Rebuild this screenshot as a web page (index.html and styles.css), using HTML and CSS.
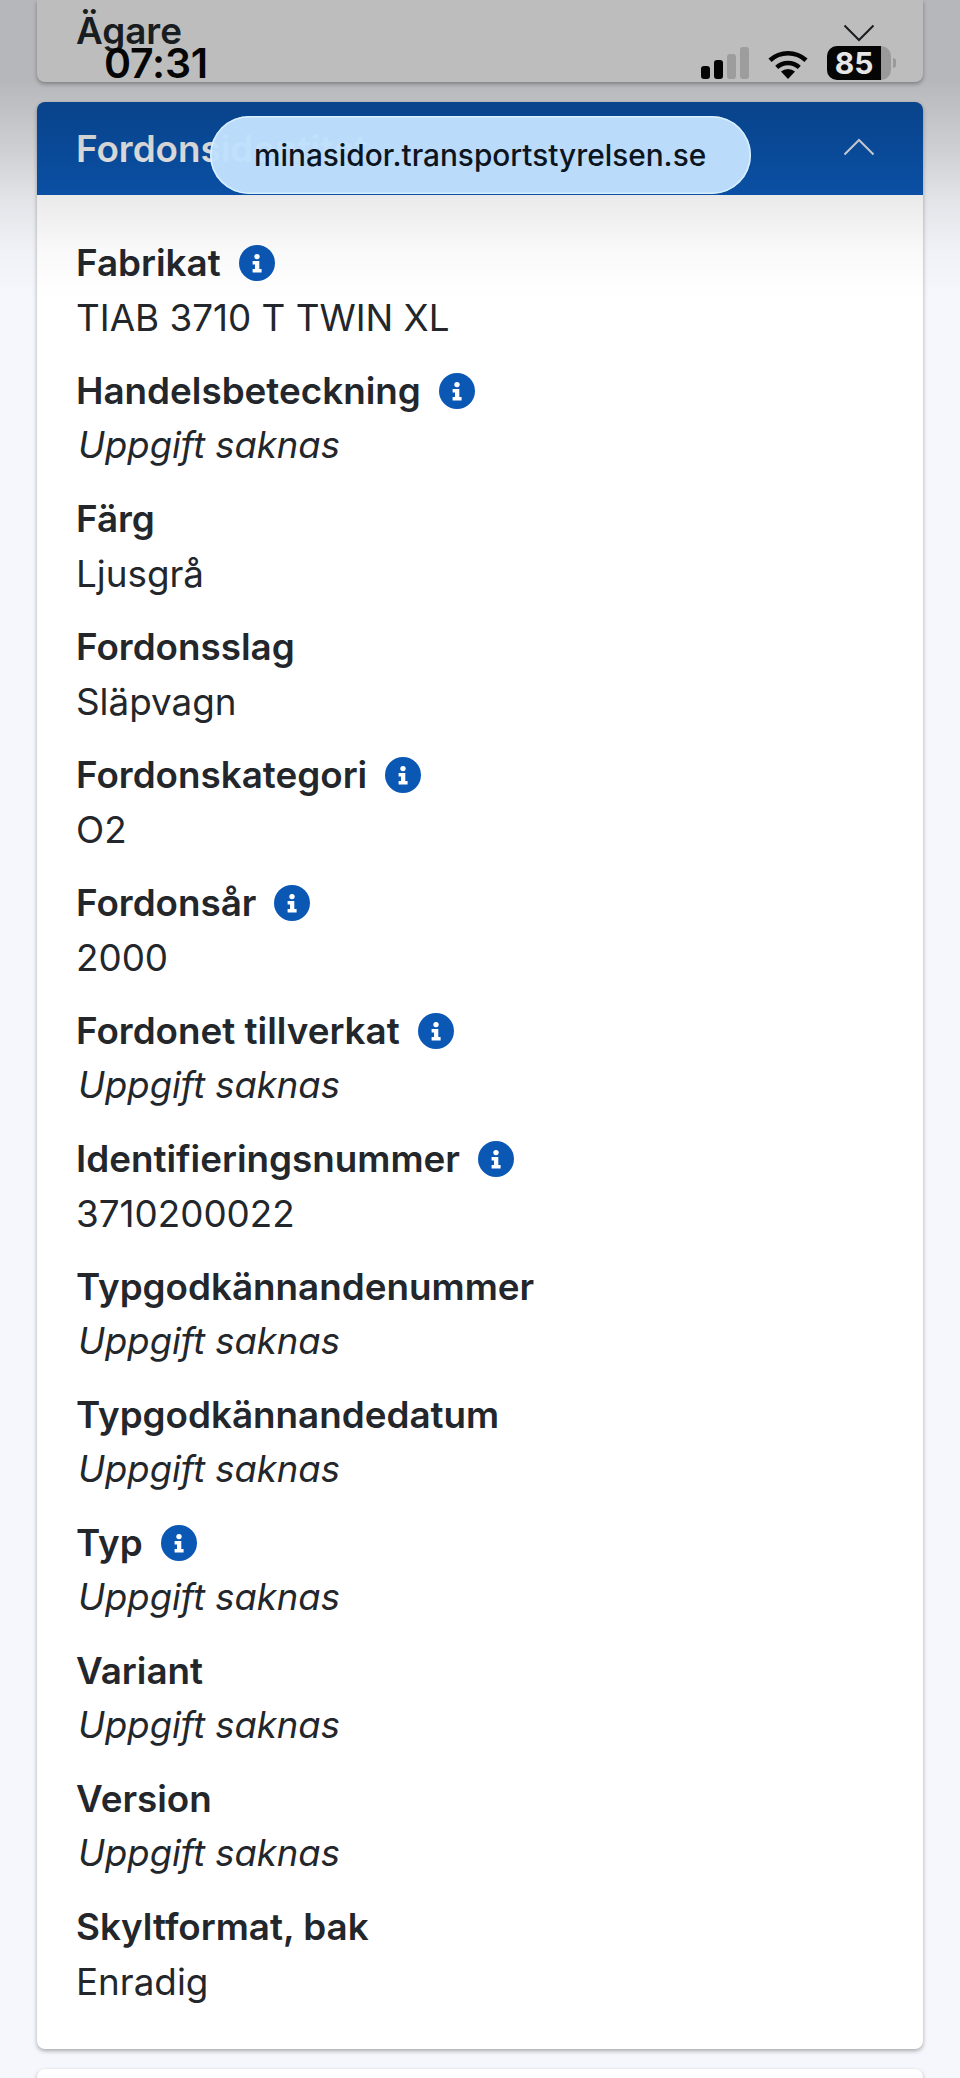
FILE: index.html
```html
<!DOCTYPE html>
<html lang="sv">
<head>
<meta charset="utf-8">
<title>Fordonsidentitet</title>
<link rel="stylesheet" href="styles.css">
</head>
<body>
<svg class="defs" width="0" height="0" aria-hidden="true">
  <symbol id="info" viewBox="0 0 36 36">
    <circle cx="18" cy="18" r="18" fill="#0b57b4"/>
    <circle cx="18" cy="11.6" r="2.7" fill="#fff"/>
    <path d="M13.6 16h6.7v8h2.3v3.4h-9v-3.4h2.4v-4.6h-2.4z" fill="#fff"/>
  </symbol>
</svg>
<main class="page">
  <section class="card card-owner">
    <div class="owner-row">
      <span class="label">Ägare</span>
      <svg class="chevron" viewBox="0 0 32 18" aria-hidden="true"><path d="M1.5 1.5 16 16 30.5 1.5" fill="none" stroke="#23272b" stroke-width="2"/></svg>
    </div>
  </section>
  <section class="card card-main">
    <header class="card-head">
      <h2 class="card-title">Fordonsidentitet</h2>
      <svg class="chevron" viewBox="0 0 32 18" aria-hidden="true"><path d="M1.5 16.5 16 2 30.5 16.5" fill="none" stroke="#e8eef7" stroke-width="2"/></svg>
    </header>
    <dl class="facts">
      <div class="fact"><dt class="label">Fabrikat <svg class="info"><use href="#info"/></svg></dt><dd class="value">TIAB 3710 T TWIN XL</dd></div>
      <div class="fact"><dt class="label">Handelsbeteckning <svg class="info"><use href="#info"/></svg></dt><dd class="value missing">Uppgift saknas</dd></div>
      <div class="fact"><dt class="label">Färg</dt><dd class="value">Ljusgrå</dd></div>
      <div class="fact"><dt class="label">Fordonsslag</dt><dd class="value">Släpvagn</dd></div>
      <div class="fact"><dt class="label">Fordonskategori <svg class="info"><use href="#info"/></svg></dt><dd class="value">O2</dd></div>
      <div class="fact"><dt class="label">Fordonsår <svg class="info"><use href="#info"/></svg></dt><dd class="value">2000</dd></div>
      <div class="fact"><dt class="label">Fordonet tillverkat <svg class="info"><use href="#info"/></svg></dt><dd class="value missing">Uppgift saknas</dd></div>
      <div class="fact"><dt class="label">Identifieringsnummer <svg class="info"><use href="#info"/></svg></dt><dd class="value">3710200022</dd></div>
      <div class="fact"><dt class="label">Typgodkännandenummer</dt><dd class="value missing">Uppgift saknas</dd></div>
      <div class="fact"><dt class="label">Typgodkännandedatum</dt><dd class="value missing">Uppgift saknas</dd></div>
      <div class="fact"><dt class="label">Typ <svg class="info"><use href="#info"/></svg></dt><dd class="value missing">Uppgift saknas</dd></div>
      <div class="fact"><dt class="label">Variant</dt><dd class="value missing">Uppgift saknas</dd></div>
      <div class="fact"><dt class="label">Version</dt><dd class="value missing">Uppgift saknas</dd></div>
      <div class="fact"><dt class="label">Skyltformat, bak</dt><dd class="value">Enradig</dd></div>
    </dl>
  </section>
  <section class="card card-next"></section>
</main>
<div class="top-shade"></div>
<div class="status-bar">
  <span class="time">07:31</span>
  <div class="status-icons">
    <svg class="signal" viewBox="0 0 48 32" aria-hidden="true">
      <rect x="0" y="19" width="9" height="13" rx="3" fill="#050505"/>
      <rect x="13" y="13" width="9" height="19" rx="3" fill="#050505"/>
      <rect x="26" y="7" width="9" height="25" rx="3" fill="#9d9d9d"/>
      <rect x="39" y="0" width="9" height="32" rx="3" fill="#9d9d9d"/>
    </svg>
    <svg class="wifi" viewBox="0 0 42 32" aria-hidden="true">
      <path d="M21 32 14 24.6a10.5 10.5 0 0 1 14 0z" fill="#050505"/>
      <path d="M9.7 20.3a16.8 16.8 0 0 1 22.6 0" fill="none" stroke="#050505" stroke-width="4.4"/>
      <path d="M3 13.2a26.6 26.6 0 0 1 36 0" fill="none" stroke="#050505" stroke-width="4.6"/>
    </svg>
    <div class="battery">
      <div class="battery-body"><span class="battery-fill">85</span></div>
      <span class="battery-tip"></span>
    </div>
  </div>
</div>
<div class="url-pill">minasidor.transportstyrelsen.se</div>
</body>
</html>
```

FILE: styles.css
```css
* { box-sizing: border-box; }

html, body { margin: 0; padding: 0; }

body {
  width: 960px;
  height: 2078px;
  overflow: hidden;
  position: relative;
  background: #f6f7fc;
  color: #23272b;
  font-family: Inter, "Liberation Sans", sans-serif;
}

.defs { position: absolute; }

.page {
  display: flex;
  flex-direction: column;
  gap: 20px;
  padding: 0 37px;
}

.card {
  background: #fff;
  border-radius: 8px;
  box-shadow: 0 2px 4px rgba(0, 0, 0, .32);
}

.card-owner {
  height: 82px;
  padding: 3px 48px 0 39px;
  border-radius: 0 0 8px 8px;
}

.owner-row {
  display: flex;
  justify-content: space-between;
  align-items: flex-start;
}

.owner-row .chevron { margin-top: 21px; }

.chevron { width: 32px; height: 18px; flex: none; }

.card-head {
  height: 93px;
  padding: 0 48px 0 39px;
  display: flex;
  justify-content: space-between;
  align-items: center;
  background: #0b57b4;
  border-radius: 8px 8px 0 0;
}

.card-head .chevron { margin-top: -4px; }

.card-title {
  margin: 0;
  color: #fff;
  font-size: 36.8px;
  line-height: 55px;
  font-weight: 600;
}

.facts {
  margin: 0;
  padding: 40px 39px 40px;
  display: flex;
  flex-direction: column;
  gap: 18px;
}

.label {
  display: flex;
  align-items: center;
  gap: 18px;
  font-size: 36.8px;
  line-height: 55px;
  font-weight: 600;
}

.value {
  margin: 0;
  font-size: 36.8px;
  line-height: 55px;
  font-weight: 400;
}

.missing { font-size: 36.4px; font-style: italic; padding-left: 2px; }

.info { width: 36px; height: 36px; flex: none; }

.card-next { height: 60px; }

.top-shade {
  position: absolute;
  inset: 0 0 auto 0;
  height: 300px;
  pointer-events: none;
  background: linear-gradient(to bottom,
    rgba(0, 0, 0, .26) 0,
    rgba(0, 0, 0, .26) 81px,
    rgba(0, 0, 0, .16) 150px,
    rgba(0, 0, 0, .08) 200px,
    rgba(0, 0, 0, .025) 250px,
    rgba(0, 0, 0, 0) 300px);
}

.status-bar {
  position: absolute;
  top: 46px;
  left: 104px;
  width: 792px;
  height: 34px;
  display: flex;
  justify-content: space-between;
  align-items: center;
  color: #050505;
}

.time {
  font-size: 41px;
  line-height: 34px;
  font-weight: 600;
  letter-spacing: -.2px;
}

.status-icons {
  display: flex;
  align-items: center;
  gap: 18px;
}

.signal { width: 48px; height: 32px; }

.wifi { width: 42px; height: 32px; }

.battery { display: flex; align-items: center; gap: 2px; }

.battery-body {
  width: 64px;
  height: 34px;
  border-radius: 10px;
  background: #9a9a9a;
  overflow: hidden;
}

.battery-fill {
  display: block;
  width: 54px;
  height: 34px;
  background: #050505;
  color: #e6e6e6;
  font-size: 30px;
  line-height: 34px;
  font-weight: 700;
  text-align: center;
}

.battery-tip {
  width: 3px;
  height: 10px;
  border-radius: 0 3px 3px 0;
  background: #9a9a9a;
}

.url-pill {
  position: absolute;
  top: 116px;
  left: 210px;
  width: 541px;
  height: 78px;
  padding-left: 44px;
  display: flex;
  align-items: center;
  border-radius: 39px;
  background: rgba(192, 224, 252, .97);
  box-shadow: inset 0 0 0 1.5px rgba(225, 245, 255, .8);
  color: #0c1420;
  font-size: 29.8px;
  line-height: 40px;
  font-weight: 500;
}
```
